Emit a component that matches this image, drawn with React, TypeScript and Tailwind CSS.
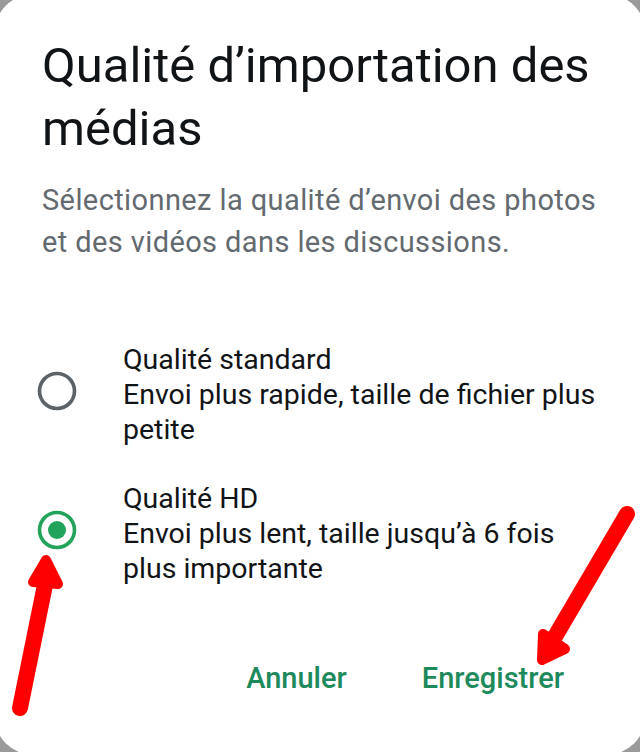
import React from "react";

const options = [
  {
    title: "Qualité standard",
    desc: "Envoi plus rapide, taille de fichier plus petite",
    selected: false,
  },
  {
    title: "Qualité HD",
    desc: "Envoi plus lent, taille jusqu’à 6 fois plus importante",
    selected: true,
  },
];

function Radio({ selected }: { selected: boolean }) {
  return (
    <svg width="40" height="40" viewBox="0 0 40 40" className="shrink-0">
      <circle
        cx="20"
        cy="20"
        r="17.5"
        fill="none"
        stroke={selected ? "#22a35c" : "#5b6268"}
        strokeWidth="3.6"
      />
      {selected && <circle cx="20" cy="20" r="9" fill="#22a35c" />}
    </svg>
  );
}

export default function App() {
  return (
    <div
      className="relative h-[752px] w-[640px] overflow-hidden bg-[#9a9a9a]"
      style={{ fontFamily: "Roboto, 'Noto Sans', sans-serif" }}
    >
      {/* Dialog */}
      <div className="-mx-[6px] -mt-[6px] h-[761px] rounded-[40px] bg-white pl-[48px] pr-[36px] pt-[40px]">
        <h1 className="text-[49px] leading-[63px] font-normal text-[#111417]">
          Qualité d’importation des médias
        </h1>
        <p className="mt-[19px] text-[29px] leading-[42px] tracking-[0.4px] text-[#636a6f]">
          Sélectionnez la qualité d’envoi des photos et des vidéos dans les discussions.
        </p>

        <div className="mt-[79px] flex flex-col gap-[34px]">
          {options.map((o) => (
            <div key={o.title} className="flex items-center">
              <div className="-ml-[5px] mb-[7px]">
                <Radio selected={o.selected} />
              </div>
              <div className="ml-[46px] text-[28.5px] leading-[35px] text-[#111417]">
                <div>{o.title}</div>
                <div>{o.desc}</div>
              </div>
            </div>
          ))}
        </div>

        <div className="mt-[76px] flex justify-end gap-[75px] pr-[46px] text-[29px] leading-[32px] font-medium text-[#1d8a5c]">
          <button>Annuler</button>
          <button>Enregistrer</button>
        </div>
      </div>

      {/* Red annotation arrows */}
      <svg
        className="pointer-events-none absolute left-0 top-0"
        width="640"
        height="752"
        viewBox="0 0 640 752"
      >
        <g stroke="#ff0000" fill="#ff0000" strokeLinecap="round" strokeLinejoin="round">
          <line x1="20" y1="708" x2="46" y2="580" strokeWidth="16" />
          <polygon points="46,560 33,582 58,584" strokeWidth="10" />
          <line x1="627" y1="514" x2="553" y2="640" strokeWidth="16" />
          <polygon points="542,660 543,634 565,649" strokeWidth="10" />
        </g>
      </svg>
    </div>
  );
}
